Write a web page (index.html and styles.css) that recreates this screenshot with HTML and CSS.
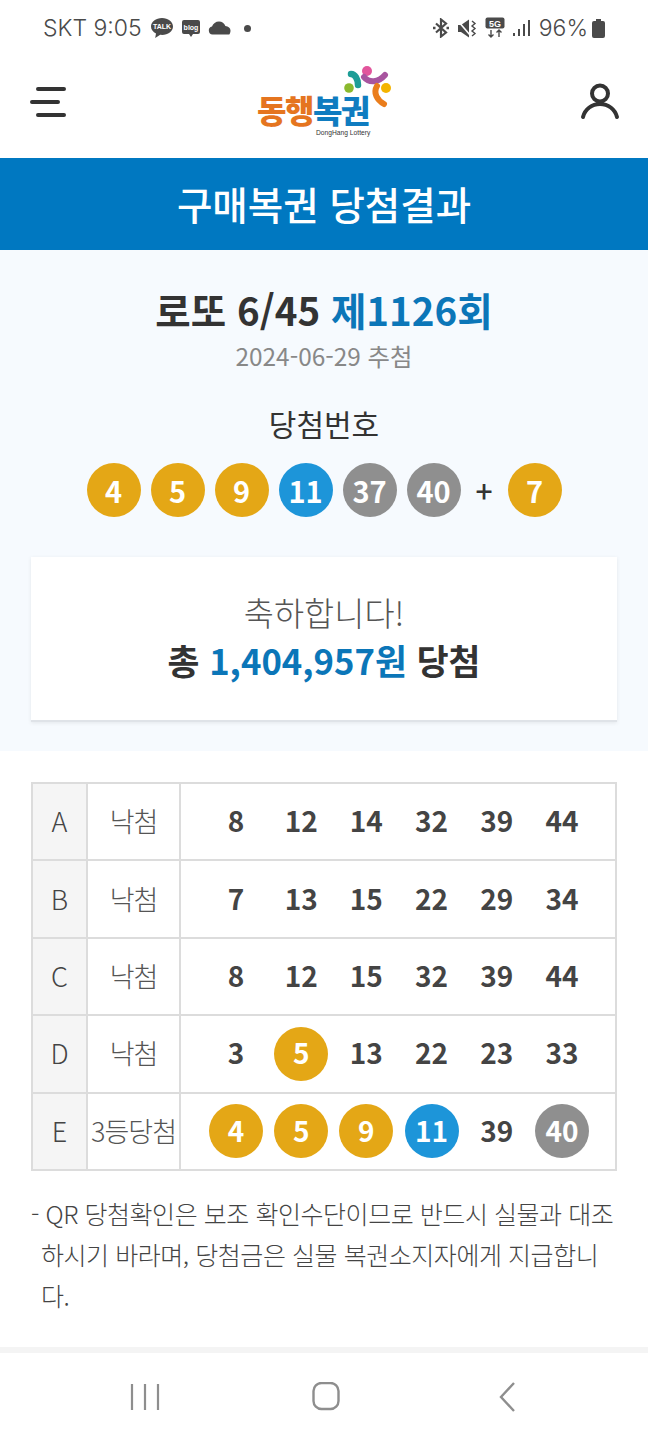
FILE: index.html
```html
<!DOCTYPE html>
<html lang="ko">
<head>
    <title>구매복권 당첨결과</title>
    <meta charset="UTF-8">
    <meta name="viewport" content="width=device-width, initial-scale=1.0">
    <link rel="stylesheet" href="styles.css">
</head>
<body>
    <div class="statusbar">
        <div class="status-left">
            <span class="clock">SKT 9:05</span>
            <svg class="ico" width="24" height="22" viewBox="0 0 24 22"><path d="M12 1C5.900 1 1 4.800 1 9.500c0 3 2 5.600 5 7.100L5.200 21l5-3.200c.6.100 1.200.1 1.800.1 6.100 0 11-3.800 11-8.400S18.100 1 12 1z" fill="#4a4a4a"/><text x="12" y="12" class="tiny" text-anchor="middle">TALK</text></svg>
            <svg class="ico" width="20" height="18" viewBox="0 0 20 18"><path d="M3 1h14a2 2 0 0 1 2 2v10a2 2 0 0 1-2 2h-5l-2 3-2-3H3a2 2 0 0 1-2-2V3a2 2 0 0 1 2-2z" fill="#4a4a4a"/><text x="10" y="11" class="tiny" text-anchor="middle">blog</text></svg>
            <svg class="ico" width="23" height="14" viewBox="0 0 23 14"><path d="M4.500 13.500a4 4 0 0 1-.5-7.900C5 2.500 7.800.5 11 .5c3 0 5.500 1.800 6.400 4.600 2.900.3 5.100 2 5.100 4.500 0 1.600-.5 3-1.200 3.900z" fill="#4a4a4a"/></svg>
            <span class="dot"></span>
        </div>
        <div class="status-right">
            <svg class="ico" width="16" height="20" viewBox="0 0 16 20" fill="none" stroke="#4a4a4a" stroke-width="2.200"><path d="M3 5.500l10 9-5 4V1.500l5 4-10 9"/><path d="M0 10h2.500M13.500 10H16" stroke-width="2.400"/></svg>
            <svg class="ico" width="20" height="19" viewBox="0 0 20 19"><path d="M1 6h3l8-5.500v18L4 13H1z" fill="#4a4a4a"/><path d="M1 2l12 14" stroke="#fff" stroke-width="1.600"/><path d="M15 2l3 2.500-3 2.500 3 2.500-3 2.500 3 2.500-3 2.500" fill="none" stroke="#4a4a4a" stroke-width="1.400"/></svg>
            <svg class="ico" width="20" height="22" viewBox="0 0 20 22"><rect x="0.500" y="0.500" width="19" height="11" rx="2" fill="#4a4a4a"/><text x="10" y="9.500" class="tiny five" text-anchor="middle">5G</text><path d="M6 13v7M3.500 17.500L6 20l2.500-2.500M14 20v-7M11.500 15.500L14 13l2.500 2.500" fill="none" stroke="#4a4a4a" stroke-width="1.400"/></svg>
            <svg class="ico" width="17" height="18" viewBox="0 0 17 18" fill="#4a4a4a"><rect x="0" y="14" width="2" height="3"/><rect x="5" y="10" width="2" height="7"/><rect x="10" y="5" width="2" height="12"/><rect x="15" y="1" width="2" height="16"/></svg>
            <span class="battery-text">96%</span>
            <svg class="ico" width="13" height="19" viewBox="0 0 13 19"><path d="M4 0h5v2h2a2 2 0 0 1 2 2v13a2 2 0 0 1-2 2H2a2 2 0 0 1-2-2V4a2 2 0 0 1 2-2h2z" fill="#4a4a4a"/></svg>
        </div>
    </div>

    <header class="topbar">
        <svg class="menu-ico" width="38" height="32" viewBox="0 0 38 32"><g stroke="#333" stroke-width="4" stroke-linecap="round"><path d="M8 3h26M2 16h26M8 29h26"/></g></svg>
        <div class="logo">
            <div class="logo-text"><span class="orange">동행</span><span class="blue">복권</span></div>
            <div class="logo-sub">DongHang Lottery</div>
            <svg class="logo-mark" width="52" height="44" viewBox="0 0 52 44">
                <circle cx="26" cy="5" r="5" fill="#e2559c"/>
                <path d="M10 8C14 8 17 13 17 19" stroke="#1d9d96" stroke-width="6.500" stroke-linecap="round" fill="none"/>
                <path d="M23 11C28 17 37 17 44 9" stroke="#a8559f" stroke-width="6" stroke-linecap="round" fill="none"/>
                <circle cx="8" cy="22" r="4.800" fill="#8ab92d"/>
                <circle cx="45" cy="22" r="5" fill="#f4b400"/>
                <path d="M36 20C32 27 36 34 43 38" stroke="#ea7d1c" stroke-width="6" stroke-linecap="round" fill="none"/>
            </svg>
        </div>
        <svg class="user-ico" width="40" height="38" viewBox="0 0 40 38" fill="none" stroke="#333" stroke-width="4" stroke-linecap="round"><circle cx="20" cy="10.500" r="8"/><path d="M3 34c2-8 9-13 17-13s15 5 17 13"/></svg>
    </header>

    <h1 class="page-title">구매복권 당첨결과</h1>

    <section class="summary">
        <h2 class="round">로또 6/45 <span class="accent">제1126회</span></h2>
        <p class="draw-date">2024-06-29 추첨</p>
        <h3 class="win-label">당첨번호</h3>
        <div class="win-balls">
            <span class="ball yellow">4</span>
            <span class="ball yellow">5</span>
            <span class="ball yellow">9</span>
            <span class="ball blue-ball">11</span>
            <span class="ball gray">37</span>
            <span class="ball gray">40</span>
            <span class="plus">+</span>
            <span class="ball yellow">7</span>
        </div>
        <div class="result-card">
            <p class="congrats">축하합니다!</p>
            <p class="prize">총 <span class="accent">1,404,957원</span> 당첨</p>
        </div>
    </section>

    <section class="tickets">
        <div class="ticket-table">
            <div class="row">
                <div class="cell game">A</div>
                <div class="cell outcome">낙첨</div>
                <div class="cell numbers"><span class="num">8</span><span class="num">12</span><span class="num">14</span><span class="num">32</span><span class="num">39</span><span class="num">44</span></div>
            </div>
            <div class="row">
                <div class="cell game">B</div>
                <div class="cell outcome">낙첨</div>
                <div class="cell numbers"><span class="num">7</span><span class="num">13</span><span class="num">15</span><span class="num">22</span><span class="num">29</span><span class="num">34</span></div>
            </div>
            <div class="row">
                <div class="cell game">C</div>
                <div class="cell outcome">낙첨</div>
                <div class="cell numbers"><span class="num">8</span><span class="num">12</span><span class="num">15</span><span class="num">32</span><span class="num">39</span><span class="num">44</span></div>
            </div>
            <div class="row">
                <div class="cell game">D</div>
                <div class="cell outcome">낙첨</div>
                <div class="cell numbers"><span class="num">3</span><span class="num ball yellow">5</span><span class="num">13</span><span class="num">22</span><span class="num">23</span><span class="num">33</span></div>
            </div>
            <div class="row">
                <div class="cell game">E</div>
                <div class="cell outcome">3등당첨</div>
                <div class="cell numbers"><span class="num ball yellow">4</span><span class="num ball yellow">5</span><span class="num ball yellow">9</span><span class="num ball blue-ball">11</span><span class="num">39</span><span class="num ball gray">40</span></div>
            </div>
        </div>
        <p class="notice">- QR 당첨확인은 보조 확인수단이므로 반드시 실물과 대조하시기 바라며, 당첨금은 실물 복권소지자에게 지급합니다.</p>
    </section>

    <nav class="navbar">
        <svg width="30" height="30" viewBox="0 0 30 30" stroke="#8e8e8e" stroke-width="2.200"><path d="M2 2v26M15 2v26M28 2v26"/></svg>
        <svg width="30" height="30" viewBox="0 0 30 30" fill="none" stroke="#8e8e8e" stroke-width="2.400"><rect x="1.500" y="1" width="25" height="26" rx="8"/></svg>
        <svg width="30" height="30" viewBox="0 0 30 30" fill="none" stroke="#8e8e8e" stroke-width="2.400"><path d="M21 1L8 15l13 14"/></svg>
    </nav>
</body>
</html>
```

FILE: styles.css
```css
* {
    box-sizing: border-box;
}
body {
    margin: 0;
    height: 1440px;
    overflow: hidden;
    background: white;
    color: #333;
    font-family: "Noto Sans CJK KR", "Noto Sans", sans-serif;
}
h1, h2, h3, p {
    margin: 0;
}
.statusbar {
    height: 56px;
    padding: 0 43px;
    display: flex;
    justify-content: space-between;
    align-items: center;
    color: #4a4a4a;
}
.status-left, .status-right {
    display: flex;
    align-items: center;
}
.status-left {
    gap: 7px;
}
.status-right {
    gap: 8px;
}
.clock, .battery-text {
    font-family: Inter, sans-serif;
    font-size: 23px;
    font-weight: 300;
    color: #4a4a4a;
}
.clock {
    margin-right: 1px;
}
.battery-text {
    margin-left: 1px;
    margin-right: -4px;
}
.tiny {
    font-family: "Liberation Sans", sans-serif;
    font-size: 7px;
    font-weight: bold;
    fill: white;
}
.five {
    font-size: 9px;
}
.dot {
    width: 7px;
    height: 7px;
    border-radius: 50%;
    background: #4a4a4a;
    margin-left: 6px;
}
.topbar {
    height: 102px;
    position: relative;
    display: flex;
    justify-content: space-between;
    align-items: center;
    padding: 0 28px 10px 30px;
}
.logo {
    position: absolute;
    left: 257px;
    top: 10px;
    width: 136px;
    height: 74px;
}
.logo-text {
    position: absolute;
    left: 0;
    top: 28px;
    display: flex;
    font-size: 32px;
    font-weight: 900;
    letter-spacing: -1.500px;
    line-height: 30px;
    white-space: nowrap;
}
.orange {
    display: block;
    height: 30px;
    color: #e5751f;
}
.blue {
    display: block;
    height: 30px;
    color: #0f7cc0;
}
.logo-sub {
    position: absolute;
    left: 59px;
    top: 63px;
    font-family: "Liberation Sans", sans-serif;
    font-size: 6.700px;
    line-height: 8px;
    color: #333;
    white-space: nowrap;
}
.logo-mark {
    position: absolute;
    left: 84px;
    top: 0;
}
.page-title {
    height: 92px;
    background: #0078c1;
    color: white;
    font-size: 38.500px;
    font-weight: 500;
    line-height: 90px;
    text-align: center;
}
.summary {
    background: #f6fafe;
    height: 501px;
    padding: 31px 31px 0;
    text-align: center;
}
.round {
    font-size: 38.500px;
    font-weight: 700;
    line-height: 56px;
}
.accent {
    color: #0b76b8;
}
.draw-date {
    margin-top: 1px;
    font-size: 24.400px;
    line-height: 36px;
    color: #888;
    font-weight: 400;
}
.win-label {
    margin-top: 27px;
    font-size: 30px;
    font-weight: 400;
    line-height: 44px;
}
.win-balls {
    margin-top: 18px;
    display: flex;
    justify-content: center;
    align-items: center;
    gap: 10px;
}
.ball {
    width: 54px;
    height: 54px;
    border-radius: 50%;
    display: flex;
    align-items: center;
    justify-content: center;
    color: white;
    font-size: 29px;
    font-weight: 700;
}
.yellow {
    background: #e4a716;
}
.blue-ball {
    background: #1d95d9;
}
.gray {
    background: #8f8f8f;
}
.plus {
    width: 27px;
    font-size: 30px;
    font-weight: 500;
}
.result-card {
    margin-top: 40px;
    height: 165px;
    background: white;
    border-bottom: 2px solid #dfe3e8;
    box-shadow: 0 1px 4px rgba(0,0,0,0.08);
    padding-top: 31px;
}
.congrats {
    font-size: 32.800px;
    font-weight: 300;
    color: #555;
    line-height: 47px;
}
.prize {
    font-size: 34.700px;
    font-weight: 700;
    line-height: 50px;
}
.tickets {
    padding: 31px 31px 0;
}
.ticket-table {
    border: 2px solid #dcdcdc;
    border-bottom: 0;
}
.row {
    display: grid;
    grid-template-columns: 55px 93px 1fr;
    height: 77.400px;
    border-bottom: 2px solid #dcdcdc;
}
.cell {
    display: flex;
    align-items: center;
    justify-content: center;
    font-size: 27px;
    font-weight: 300;
    color: #444;
}
.game {
    padding-bottom: 2px;
    background: #f5f5f5;
    border-right: 2px solid #dcdcdc;
}
.outcome {
    padding-bottom: 2px;
    border-right: 2px solid #dcdcdc;
    color: #555;
    letter-spacing: -1px;
}
.numbers {
    justify-content: flex-start;
    padding-left: 28px;
    gap: 11.200px;
}
.num {
    width: 54px;
    height: 54px;
    padding-bottom: 3px;
    display: flex;
    align-items: center;
    justify-content: center;
    font-size: 28px;
    font-weight: 700;
}
.num.ball {
    color: white;
}
.notice {
    margin-top: 22px;
    padding-left: 10px;
    text-indent: -10px;
    font-size: 25px;
    line-height: 41px;
    font-weight: 300;
    color: #444;
    letter-spacing: -0.450px;
}
.navbar {
    position: absolute;
    left: 0;
    right: 0;
    top: 1347px;
    height: 93px;
    border-top: 6px solid #f4f4f4;
    background: white;
    display: flex;
    justify-content: space-between;
    align-items: center;
    padding: 0 125px 0 130px;
}
```
